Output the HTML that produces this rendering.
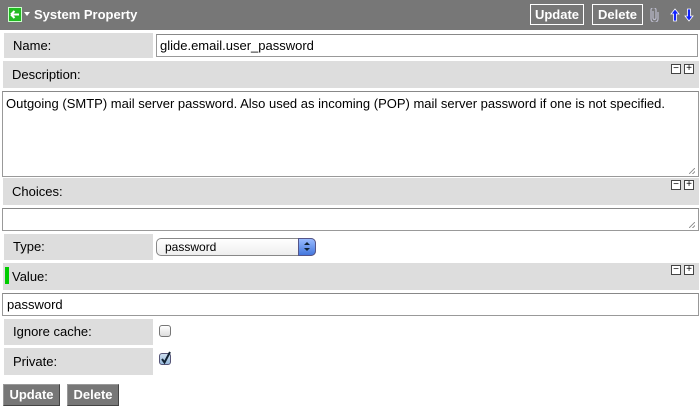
<!DOCTYPE html>
<html><head><meta charset="utf-8"><style>
*{margin:0;padding:0;box-sizing:border-box}
body{width:700px;height:408px;background:#fff;font-family:"Liberation Sans",Arial,sans-serif;font-size:13px;color:#000;position:relative;overflow:hidden}
.a{position:absolute}
.hdr{left:0;top:0;width:700px;height:30px;background:#777}
.lbl{background:#ddd;padding-left:9px;line-height:25px}
.inp{background:#fff;border:1px solid #999;border-top-color:#888;padding-left:3px}
.hb{border:1px solid #fff;color:#fff;font-weight:bold;font-size:13px;height:21px;top:4px;line-height:19px;text-align:center}
.tog{width:10px;height:10px;border:1px solid #444;background:#fff;font-size:10px;line-height:8px;text-align:center}
.btn{background:#777;color:#fff;font-weight:bold;border:1px solid #444;border-top-color:#999;border-left-color:#999;height:22px;line-height:20px;text-align:center;top:384px}
.grip{right:3px;bottom:2px;width:6px;height:6px;background:linear-gradient(135deg,transparent 45%,#999 45%,#999 55%,transparent 55%,transparent 75%,#999 75%,#999 85%,transparent 85%)}
</style></head><body>
<div class="a hdr"></div>
<svg class="a" style="left:8px;top:7px" width="14" height="15"><rect x=".5" y=".5" width="13" height="14" fill="#2b2" stroke="#cfc"/><path d="M3 7.5h8M3 7.5l3.5-3.5M3 7.5l3.5 3.5" stroke="#fff" stroke-width="2" fill="none"/></svg>
<div class="a" style="left:24px;top:12px;width:0;height:0;border-left:3px solid transparent;border-right:3px solid transparent;border-top:4px solid #fff"></div>
<div class="a" style="left:34px;top:7px;color:#fff;font-weight:bold;font-size:13px">System Property</div>
<div class="a hb" style="left:530px;width:54px">Update</div>
<div class="a hb" style="left:592px;width:51px">Delete</div>
<svg class="a" style="left:650px;top:8px" width="9" height="14"><path d="M3 3v7a1.5 1.5 0 003 0V2a2.5 2.5 0 00-5 0v9a3 3 0 007 0V4" fill="none" stroke="#bbc" stroke-width="1.2"/></svg>
<svg class="a" style="left:670px;top:8px" width="10" height="14"><path d="M5 1L1 6h2.5v7h3V6H9z" fill="#12f" stroke="#fff" stroke-width=".8"/></svg>
<svg class="a" style="left:684px;top:8px" width="10" height="14"><path d="M5 13L1 8h2.5V1h3v7H9z" fill="#12f" stroke="#fff" stroke-width=".8"/></svg>

<div class="a lbl" style="left:4px;top:33px;width:149px;height:25px">Name:</div>
<div class="a inp" style="left:156px;top:34px;width:542px;height:23px;line-height:21px">glide.email.user_password</div>

<div class="a lbl" style="left:3px;top:61px;width:696px;height:27px;line-height:27px">Description:</div>
<div class="a tog" style="left:671px;top:64px">&minus;</div><div class="a tog" style="left:684px;top:64px">+</div>
<div class="a inp" style="left:2px;top:91px;width:697px;height:86px;padding-top:4px;line-height:15px">Outgoing (SMTP) mail server password. Also used as incoming (POP) mail server password if one is not specified.<div class="a grip"></div></div>

<div class="a lbl" style="left:3px;top:178px;width:696px;height:27px;line-height:27px">Choices:</div>
<div class="a tog" style="left:671px;top:180px">&minus;</div><div class="a tog" style="left:684px;top:180px">+</div>
<div class="a inp" style="left:2px;top:208px;width:697px;height:23px"><div class="a grip"></div></div>

<div class="a lbl" style="left:4px;top:234px;width:149px;height:26px;line-height:26px">Type:</div>
<div class="a" style="left:156px;top:238px;width:160px;height:18px;border:1px solid #888;border-radius:5px;background:linear-gradient(#fff,#eee);padding-left:8px;font-size:12px;line-height:16px">password</div>
<div class="a" style="left:298px;top:238px;width:18px;height:18px;border-radius:0 5px 5px 0;background:linear-gradient(#9bf,#47d);border:1px solid #558"></div>
<div class="a" style="left:304px;top:242px;border-left:3px solid transparent;border-right:3px solid transparent;border-bottom:3px solid #123"></div>
<div class="a" style="left:304px;top:248px;border-left:3px solid transparent;border-right:3px solid transparent;border-top:3px solid #123"></div>

<div class="a lbl" style="left:3px;top:263px;width:696px;height:27px;line-height:27px">Value:</div>
<div class="a" style="left:5px;top:267px;width:4px;height:17px;background:#0c0"></div>
<div class="a tog" style="left:671px;top:265px">&minus;</div><div class="a tog" style="left:684px;top:265px">+</div>
<div class="a inp" style="left:2px;top:293px;width:697px;height:23px;line-height:21px;padding-left:4px">password</div>

<div class="a lbl" style="left:4px;top:319px;width:149px;height:26px;line-height:26px">Ignore cache:</div>
<div class="a" style="left:159px;top:325px;width:12px;height:12px;border:1px solid #777;border-radius:3px;background:linear-gradient(#fff,#ddd)"></div>
<div class="a lbl" style="left:4px;top:348px;width:149px;height:27px;line-height:27px">Private:</div>
<div class="a" style="left:159px;top:353px;width:12px;height:12px;border:1px solid #557;border-radius:3px;background:linear-gradient(#cde,#9bd)"></div>
<svg class="a" style="left:159px;top:350px" width="14" height="15"><path d="M3 9l2.5 3.5L11 2" fill="none" stroke="#123" stroke-width="2"/></svg>

<div class="a btn" style="left:3px;width:57px">Update</div>
<div class="a btn" style="left:67px;width:52px">Delete</div>
</body></html>
